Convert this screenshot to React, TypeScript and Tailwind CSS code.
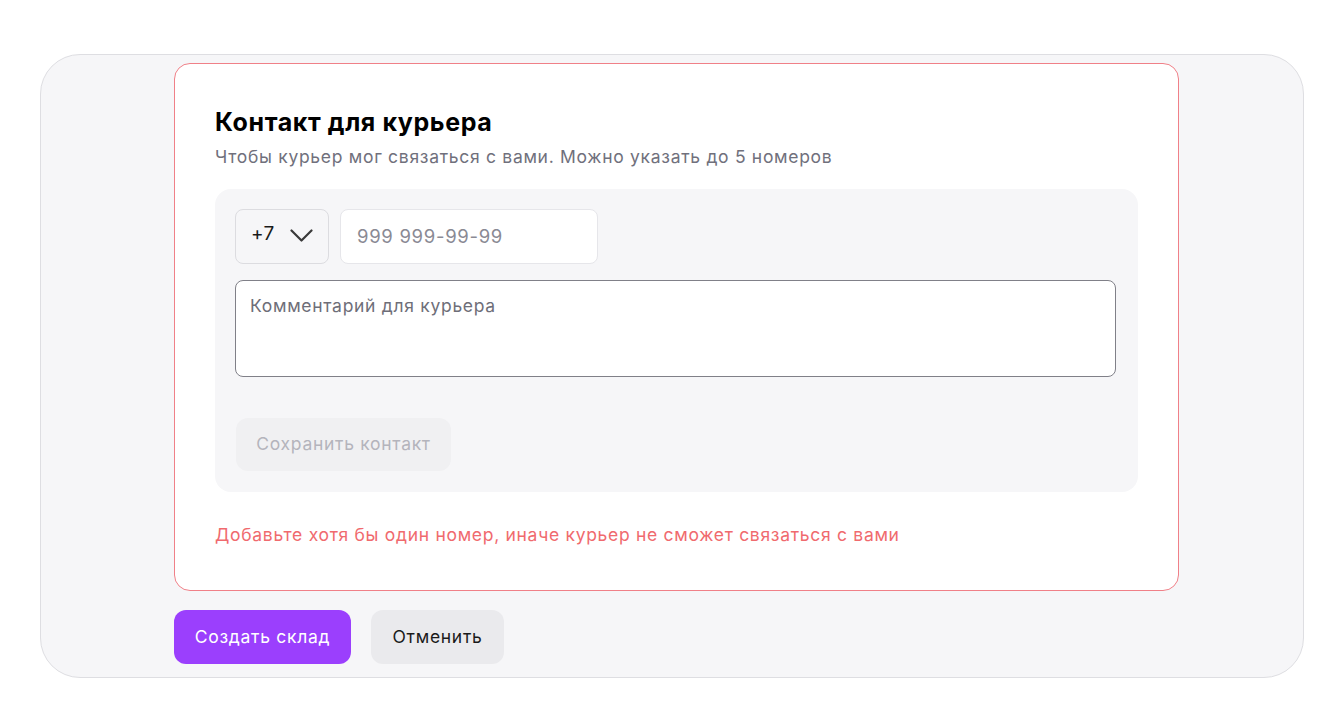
import React from "react";

export default function App() {
  return (
    <div className="min-h-[724px] w-[1344px] bg-white pt-[54px] pl-[40px]" style={{ fontFamily: "Inter, 'Noto Sans', sans-serif" }}>
      <div className="w-[1264px] h-[624px] rounded-[40px] border border-[#dedee2] bg-[#f6f6f8] pt-[8px] pl-[133px]">
        <div className="w-[1005px] h-[528px] rounded-[16px] border border-[#f08088] bg-white pt-[43px] pl-[40px]">
          <h2 className="text-[25px] leading-[30px] font-bold text-black tracking-[0.6px]">Контакт для курьера</h2>
          <p className="mt-[8px] text-[17.5px] leading-[24px] text-[#70707c] tracking-[0.7px]">Чтобы курьер мог связаться с вами. Можно указать до 5 номеров</p>
          <div className="mt-[20px] w-[923px] h-[303px] rounded-[16px] bg-[#f6f6f8] pt-[20px] pl-[20px]">
            <div className="flex gap-[11px]">
              <div className="flex h-[55px] w-[94px] items-center rounded-[8px] border border-[#dcdce0] bg-[#f6f6f8] pl-[15px]">
                <span className="text-[19px] leading-[24px] text-[#1a1a1a] -mt-[5px] tracking-[0.3px]">+7</span>
                <svg className="ml-[15px] -mt-[2px]" width="23" height="14" viewBox="0 0 23 14" fill="none">
                  <path d="M1.5 1.5 L11.5 11.5 L21.5 1.5" stroke="#3a3a3a" strokeWidth="2.2" strokeLinecap="round" strokeLinejoin="round" />
                </svg>
              </div>
              <div className="flex h-[55px] w-[258px] items-center rounded-[8px] border border-[#e6e6ea] bg-white pl-[16px]">
                <span className="text-[18.5px] text-[#8a8a94] tracking-[0.7px]">999 999-99-99</span>
              </div>
            </div>
            <div className="mt-[16px] h-[97px] w-[881px] rounded-[8px] border border-[#808088] bg-white pl-[14px] pt-[12px]">
              <span className="text-[17.5px] text-[#6e6e78] tracking-[0.7px]">Комментарий для курьера</span>
            </div>
            <div className="mt-[41px] flex h-[53px] w-[215px] items-center justify-center rounded-[12px] bg-[#f0f0f2] ml-[1px]">
              <span className="text-[17.5px] text-[#b4b4bc] tracking-[0.7px]">Сохранить контакт</span>
            </div>
          </div>
          <p className="mt-[31px] text-[17.5px] leading-[24px] text-[#f06a6e] tracking-[0.7px]">Добавьте хотя бы один номер, иначе курьер не сможет связаться с вами</p>
        </div>
        <div className="mt-[19px] flex gap-[20px]">
          <button className="h-[54px] w-[177px] rounded-[12px] bg-[#9b3ffd] text-[17.5px] text-white tracking-[0.7px]">Создать склад</button>
          <button className="h-[54px] w-[133px] rounded-[12px] bg-[#eaeaed] text-[17.5px] text-[#1a1a1a] tracking-[0.7px]">Отменить</button>
        </div>
      </div>
    </div>
  );
}
